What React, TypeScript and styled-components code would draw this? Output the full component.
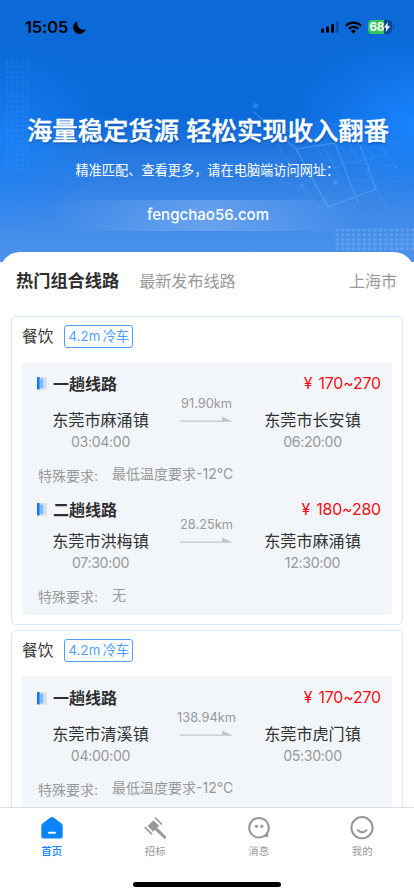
import React from "react";
import styled, { createGlobalStyle } from "styled-components";

const GlobalStyle = createGlobalStyle`
  * { box-sizing: border-box; }
  html, body { margin: 0; padding: 0; background: #fff; }
  body {
    font-family: Inter, "Noto Sans CJK SC", sans-serif;
    color: #333;
    overflow: hidden;
  }
`;

const Screen = styled.div`
  width: 414px;
  height: 896px;
  display: flex;
  flex-direction: column;
  overflow: hidden;
  background: #fff;
`;

const Hero = styled.header`
  position: relative;
  flex: none;
  height: 262px;
  display: flex;
  flex-direction: column;
  align-items: center;
  color: #fff;
  background:
    radial-gradient(ellipse 125px 85px at 100% 124px, rgba(25, 132, 255, 0.95), rgba(25, 132, 255, 0) 100%),
    radial-gradient(ellipse 110px 95px at 0% 142px, rgba(25, 130, 250, 0.85), rgba(25, 130, 250, 0) 100%),
    linear-gradient(180deg, #0b6ad8 0, #0b6ad9 115px, #2478df 155px, #3c87e8 205px, #4c93ee 262px);
`;

const HeroArt = styled.svg`
  position: absolute;
  left: 0;
  top: 0;
  pointer-events: none;
`;

const StatusBar = styled.div`
  position: relative;
  width: 100%;
  height: 54px;
  padding: 0 20px 0 25px;
  display: flex;
  align-items: center;
  color: #000;
`;

const Clock = styled.span`
  width: 47.5px;
  font-size: 16.4px;
  line-height: 20px;
  font-weight: 600;
  letter-spacing: -0.1px;
`;

const StatusIcons = styled.div`
  margin-left: auto;
  display: flex;
  align-items: center;
  gap: 6px;
`;

const Battery = styled.div`
  width: 23.5px;
  height: 13.5px;
  border-radius: 4px;
  display: flex;
  align-items: center;
  padding-left: 1.5px;
  background: linear-gradient(90deg, #34c759 0 16px, #084a97 16px);
  color: #fff;
  font-size: 11.5px;
  line-height: 13px;
  font-weight: 700;
  letter-spacing: -0.2px;
`;

const BatteryTip = styled.i`
  width: 1.5px;
  height: 4px;
  margin-left: -5px;
  border-radius: 0 2px 2px 0;
  background: #084a97;
`;

const HeroTitle = styled.h1`
  position: relative;
  margin: 58px 0 0;
  padding-left: 2px;
  font-size: 25.35px;
  line-height: 38px;
  font-weight: 500;
  word-spacing: 0.5px;
  white-space: nowrap;
  -webkit-text-stroke: 0.4px #fff;
  text-shadow: 0.5px 2px 2px rgba(0, 50, 130, 0.4);
`;

const HeroHint = styled.p`
  position: relative;
  margin: 10px 0 0 75.5px;
  font-size: 13.2px;
  line-height: 20px;
  white-space: nowrap;
  align-self: flex-start;
`;

const HeroLink = styled.div`
  position: relative;
  margin-top: 20px;
  width: 300px;
  height: 31px;
  display: flex;
  align-items: center;
  justify-content: center;
  font-size: 15px;
  line-height: 20px;
  font-weight: 500;
  letter-spacing: 0.05px;
  padding: 0 0 2px 2px;
  background: linear-gradient(90deg, rgba(255, 255, 255, 0), rgba(255, 255, 255, 0.2) 50%, rgba(255, 255, 255, 0));
`;

const Sheet = styled.main`
  position: relative;
  flex: 1;
  min-height: 0;
  margin-top: -10.5px;
  overflow: hidden;
  background: #fff;
  border-radius: 20px 20px 0 0;
`;

const Tabs = styled.nav`
  height: 64px;
  padding: 0 17px 5px 16px;
  display: flex;
  align-items: center;
`;

const Tab = styled.span<{ $active?: boolean }>`
  margin-right: 20px;
  font-size: ${(p) => (p.$active ? "17.2px" : "16.1px")};
  line-height: 26px;
  font-weight: ${(p) => (p.$active ? 600 : 400)};
  color: ${(p) => (p.$active ? "#2e2e2e" : "#999")};
`;

const City = styled.span`
  margin-left: auto;
  font-size: 16px;
  line-height: 26px;
  color: #999;
`;

const Card = styled.article`
  height: 309.5px;
  margin: 0 11px 5px;
  padding: 0 10px;
  border: 1px solid #d5e8fd;
  border-radius: 5px;
`;

const CardHead = styled.div`
  height: 45px;
  padding-bottom: 6px;
  display: flex;
  align-items: center;
  gap: 11px;
`;

const Category = styled.span`
  padding-top: 1px;
  font-size: 15.7px;
  line-height: 24px;
`;

const Badge = styled.span`
  width: 69px;
  height: 23px;
  border: 1px solid #4d9fff;
  border-radius: 3px;
  color: #4d9fff;
  font-size: 13.2px;
  line-height: 21px;
  letter-spacing: 0.1px;
  word-spacing: -1.5px;
  text-align: center;
  white-space: nowrap;
`;

const Panel = styled.div`
  height: 253px;
  padding: 15px 11px 0 15px;
  border-radius: 3px;
  background: #f2f6fb;
`;

const Leg = styled.section`
  height: 126px;
`;

const LegHead = styled.div`
  height: 14px;
  display: flex;
  align-items: center;
`;

const LegName = styled.strong`
  margin-left: 6px;
  font-size: 16px;
  line-height: 14px;
  font-weight: 600;
  color: #2e2e2e;
`;

const Price = styled.span`
  margin-left: auto;
  font-size: 15.8px;
  line-height: 14px;
  letter-spacing: -0.1px;
  word-spacing: 1.8px;
  color: #fa0a0f;
`;

const Route = styled.div<{ $gap: number }>`
  margin-top: ${(p) => p.$gap}px;
  height: 54px;
  display: grid;
  grid-template-columns: 127px 85px 127px;
`;

const Stop = styled.div`
  padding-top: 12px;
  text-align: center;
`;

const Place = styled.div`
  font-size: 16.1px;
  line-height: 24px;
  white-space: nowrap;
`;

const Time = styled.div`
  padding-top: 1px;
  font-size: 14.2px;
  line-height: 18px;
  letter-spacing: -0.35px;
  color: #999;
`;

const Distance = styled.div`
  display: flex;
  flex-direction: column;
  align-items: center;
  gap: 4px;
  font-size: 12.8px;
  line-height: 16px;
  color: #999;
`;

const Requirement = styled.div`
  margin-top: 16px;
  padding-left: 1px;
  display: flex;
  gap: 13px;
  font-size: 14px;
  line-height: 20px;
  color: #999;
`;

const RequirementLabel = styled.span`
  width: 61px;
  white-space: nowrap;
`;

const RequirementText = styled.span`
  margin-top: -2px;
`;

const BottomBar = styled.footer`
  flex: none;
  height: 89px;
  border-top: 1px solid #dcdee0;
  background: #fff;
  display: flex;
  flex-direction: column;
  align-items: center;
`;

const NavRow = styled.div`
  width: 100%;
  height: 74px;
  display: grid;
  grid-template-columns: repeat(4, 1fr);
`;

const NavItem = styled.div<{ $active?: boolean }>`
  padding-top: 8px;
  display: flex;
  flex-direction: column;
  align-items: center;
  gap: 4px;
  font-size: 10.4px;
  line-height: 16px;
  font-weight: ${(p) => (p.$active ? 500 : 400)};
  color: ${(p) => (p.$active ? "#0a84ff" : "#999")};
`;

const HomeIndicator = styled.i`
  width: 148px;
  height: 5px;
  border-radius: 3px;
  background: #000;
`;

const dots = (x0: number, y0: number, cols: number, rows: number, dx: number, dy: number, w: number) =>
  Array.from({ length: cols * rows }, (_, i) => (
    <rect key={`${x0}-${i}`} x={x0 + (i % cols) * dx} y={y0 + Math.floor(i / cols) * dy} width={w} height={w * 0.85} rx="0.6" />
  ));

const Decoration = () => (
  <HeroArt width="414" height="262" viewBox="0 0 414 262">
    <g fill="#7fbcff" opacity="0.1">{dots(6, 61, 5, 23, 4.9, 4.9, 2.8)}</g>
    <g fill="#b9dcff" opacity="0.2">{dots(335.5, 228.5, 15, 5, 5.4, 4.7, 3.6)}</g>
    <g fill="none" stroke="#62b0ff" strokeLinejoin="round">
      <g opacity="0.4" strokeWidth="1.6">
        <path d="M254 112 296 149 335 143M296 149 328 207 376 189 360 145M335 143 358 203" />
      </g>
      <g opacity="0.2" strokeWidth="1.1">
        <path d="M285 131 323 121 399 143M304 120 328 169 350 163 386 155 381 143M314 131 342 179 402 182M350 145 376 189 388 210M278 145 298 176 319 209 387 215M302 186 311 203 291 198M319 160 395 166M280 182 302 186 290 166M353 132 372 156 367 173M382 149 395 166M335 182 319 209" />
      </g>
    </g>
    <g fill="#5aabff" opacity="0.4">
      <circle cx="255.5" cy="105.5" r="2.6" />
      <circle cx="335.5" cy="182" r="2.6" />
      <circle cx="302" cy="186" r="1.8" />
      <circle cx="396" cy="167" r="1.5" />
    </g>
  </HeroArt>
);

const Moon = () => (
  <svg width="13" height="13" viewBox="0 0 13 13">
    <path d="M4.6 .2C3.1 4.9 7.2 10 12.8 8.3A6.5 6.5 0 1 1 4.6 .2Z" fill="#000" />
  </svg>
);

const Signal = () => (
  <svg width="18" height="12" viewBox="0 0 18 12">
    <rect x="0" y="7.6" width="3" height="4.2" rx="1" />
    <rect x="5" y="5.5" width="3" height="6.3" rx="1" />
    <rect x="10" y="3" width="3" height="8.8" rx="1" />
    <rect x="15" y="0.2" width="3" height="11.6" rx="1" opacity="0.24" />
  </svg>
);

const Wifi = () => (
  <svg width="17" height="13" viewBox="0 0 17 13">
    <g fill="none" stroke="#000" strokeWidth="2.3">
      <path d="M.9 4.8a10.8 10.8 0 0 1 15.2 0" />
      <path d="M3.8 7.9a6.7 6.7 0 0 1 9.4 0" />
    </g>
    <path d="M5.9 10a3.8 3.8 0 0 1 5.2 0L8.5 12.7Z" />
  </svg>
);

const Bolt = () => (
  <svg width="6" height="10" viewBox="0 0 6 10">
    <path d="M3.9 0 0 5.6h2.3L1.8 10 6 4.2H3.4Z" fill="#fff" />
  </svg>
);

const LegMark = () => (
  <svg width="10" height="13" viewBox="0 0 10 13">
    <rect x="3" width="6.8" height="12.6" fill="#dddddf" />
    <rect x="5.3" y="3.3" width="3.3" height="6.5" fill="#c1defd" />
    <rect x="3" y="1.6" width="3" height="9.7" fill="#80b9fa" />
    <rect width="2.7" height="12.6" rx="0.5" fill="#087cff" />
  </svg>
);

const Arrow = () => (
  <svg width="53" height="7" viewBox="0 0 53 7">
    <path d="M0 4.4H42V.5L53 5.7H0Z" fill="#c3c4c6" />
  </svg>
);

const HomeIcon = () => (
  <svg width="24" height="24" viewBox="0 0 24 24">
    <path d="M10.4 1.6q1.6-1.1 3.2 0L21.5 7.5Q22.7 8.4 22.7 10V20.5q0 2-2 2H3.3q-2 0-2-2V10q0-1.6 1.2-2.5Z" fill="#0a84ff" />
    <path d="M9 16.8h6" stroke="#fff" strokeWidth="1.9" strokeLinecap="round" />
  </svg>
);

const GavelIcon = () => (
  <svg width="24" height="24" viewBox="0 0 24 24">
    <g fill="none" stroke="#999" strokeLinecap="round">
      <path d="M12.4 2 18.4 8M2.3 11.6 8.6 17.9" strokeWidth="1.7" />
      <path d="M12.5 12.4 21.7 21.2" strokeWidth="3" />
    </g>
    <path d="M10.5 4.2 16.1 9.8 10.2 15.7 4.6 10.1Z" fill="#999" />
  </svg>
);

const MessageIcon = () => (
  <svg width="24" height="24" viewBox="0 0 24 24">
    <circle cx="12" cy="11.7" r="9.8" fill="none" stroke="#999" strokeWidth="2" />
    <path d="M21.2 13.5V21h-7.5Q19.8 19 21.2 13.5Z" fill="#999" />
    <circle cx="9.4" cy="10.3" r="1.6" fill="#999" />
    <circle cx="14.8" cy="10.3" r="1.6" fill="#999" />
  </svg>
);

const ProfileIcon = () => (
  <svg width="24" height="24" viewBox="0 0 24 24">
    <g fill="none" stroke="#999" strokeWidth="2">
      <circle cx="12" cy="11.7" r="10.6" />
      <path d="M7.9 14.2q4.3 3.8 8.6 0" strokeLinecap="round" />
    </g>
  </svg>
);

interface LegData {
  name: string;
  price: string;
  from: string;
  depart: string;
  to: string;
  arrive: string;
  distance: string;
  requirement: string;
  gap: number;
}

const cards: LegData[][] = [
  [
    { name: "一趟线路", price: "170~270", from: "东莞市麻涌镇", depart: "03:04:00", to: "东莞市长安镇", arrive: "06:20:00", distance: "91.90km", requirement: "最低温度要求-12°C", gap: 5 },
    { name: "二趟线路", price: "180~280", from: "东莞市洪梅镇", depart: "07:30:00", to: "东莞市麻涌镇", arrive: "12:30:00", distance: "28.25km", requirement: "无", gap: 0 },
  ],
  [
    { name: "一趟线路", price: "170~270", from: "东莞市清溪镇", depart: "04:00:00", to: "东莞市虎门镇", arrive: "05:30:00", distance: "138.94km", requirement: "最低温度要求-12°C", gap: 5 },
  ],
];

const RouteLeg = ({ leg }: { leg: LegData }) => (
  <Leg>
    <LegHead>
      <LegMark />
      <LegName>{leg.name}</LegName>
      <Price>¥ {leg.price}</Price>
    </LegHead>
    <Route $gap={leg.gap}>
      <Stop>
        <Place>{leg.from}</Place>
        <Time>{leg.depart}</Time>
      </Stop>
      <Distance>
        {leg.distance}
        <Arrow />
      </Distance>
      <Stop>
        <Place>{leg.to}</Place>
        <Time>{leg.arrive}</Time>
      </Stop>
    </Route>
    <Requirement>
      <RequirementLabel>特殊要求:</RequirementLabel>
      <RequirementText>{leg.requirement}</RequirementText>
    </Requirement>
  </Leg>
);

export default function App() {
  return (
    <>
      <GlobalStyle />
      <Screen>
        <Hero>
          <Decoration />
          <StatusBar>
            <Clock>15:05</Clock>
            <Moon />
            <StatusIcons>
              <Signal />
              <Wifi />
              <Battery>
                68
                <Bolt />
              </Battery>
              <BatteryTip />
            </StatusIcons>
          </StatusBar>
          <HeroTitle>海量稳定货源 轻松实现收入翻番</HeroTitle>
          <HeroHint>精准匹配、查看更多，请在电脑端访问网址：</HeroHint>
          <HeroLink>fengchao56.com</HeroLink>
        </Hero>
        <Sheet>
          <Tabs>
            <Tab $active>热门组合线路</Tab>
            <Tab>最新发布线路</Tab>
            <City>上海市</City>
          </Tabs>
          {cards.map((legs, i) => (
            <Card key={i}>
              <CardHead>
                <Category>餐饮</Category>
                <Badge>4.2m 冷车</Badge>
              </CardHead>
              <Panel>
                {legs.map((leg) => (
                  <RouteLeg key={leg.name} leg={leg} />
                ))}
              </Panel>
            </Card>
          ))}
        </Sheet>
        <BottomBar>
          <NavRow>
            <NavItem $active>
              <HomeIcon />
              首页
            </NavItem>
            <NavItem>
              <GavelIcon />
              招标
            </NavItem>
            <NavItem>
              <MessageIcon />
              消息
            </NavItem>
            <NavItem>
              <ProfileIcon />
              我的
            </NavItem>
          </NavRow>
          <HomeIndicator />
        </BottomBar>
      </Screen>
    </>
  );
}
